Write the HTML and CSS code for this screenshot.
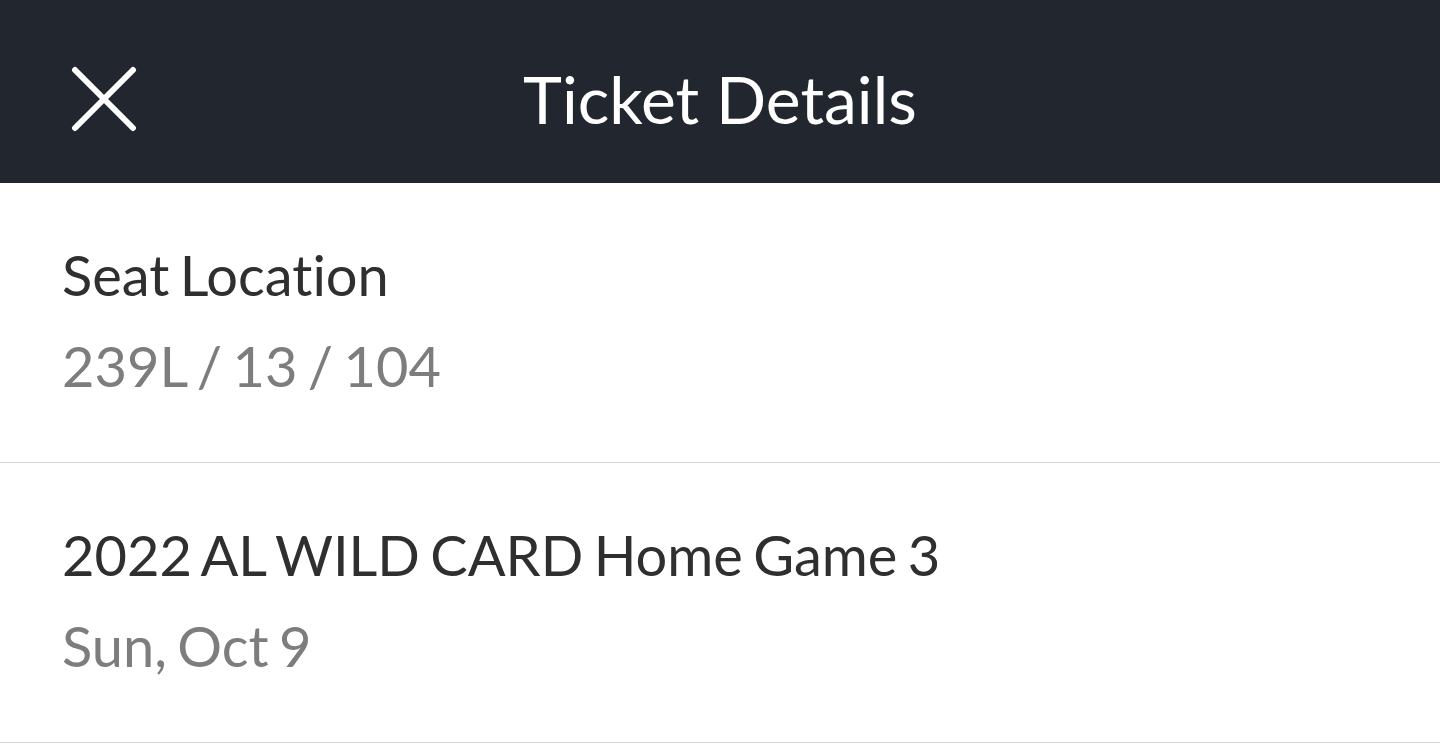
FILE: index.html
```html
<!DOCTYPE html>
<html lang="en">
<head>
    <meta charset="UTF-8">
    <meta name="viewport" content="width=device-width, initial-scale=1.0">
    <title>Ticket Details</title>
    <link rel="stylesheet" href="styles.css">
</head>
<body>
    <header class="topbar">
        <button class="close-btn" aria-label="Close">
            <svg width="66" height="66" viewBox="0 0 66 66">
                <path d="M4 4 L62 62 M62 4 L4 62" stroke="#fff" stroke-width="6" stroke-linecap="round" fill="none"/>
            </svg>
        </button>
        <h1 class="topbar-title">Ticket Details</h1>
        <div></div>
    </header>

    <section class="detail-row">
        <div class="detail-label">Seat Location</div>
        <div class="detail-value">239L / 13 / 104</div>
    </section>

    <section class="detail-row">
        <div class="detail-label">2022 AL WILD CARD Home Game 3</div>
        <div class="detail-value">Sun, Oct 9</div>
    </section>
</body>
</html>
```

FILE: styles.css
```css
body {
    margin: 0;
    padding: 0;
    background-color: #fff;
    font-family: Lato, "Open Sans", sans-serif;
    font-variant-ligatures: none;
}

.topbar {
    height: 183px;
    box-sizing: border-box;
    padding: 14px 0 0 71px;
    background-color: #22262e;
    display: grid;
    grid-template-columns: 1fr auto 1fr;
    align-items: center;
}

.close-btn {
    justify-self: start;
    background: none;
    border: none;
    padding: 0;
    width: 66px;
    height: 66px;
    cursor: pointer;
}

.close-btn svg {
    display: block;
}

.topbar-title {
    margin: 0 0 0 -71px;
    color: #fff;
    font-size: 66px;
    font-weight: 400;
}

.detail-row {
    padding: 46px 62px 51px;
    border-bottom: 1px solid #d4d4d4;
}

.detail-label,
.detail-value {
    font-size: 56px;
    line-height: 91px;
    word-spacing: -4px;
}

.detail-label {
    color: #2f2f2f;
}

.detail-value {
    color: #7d7d7d;
}
```
